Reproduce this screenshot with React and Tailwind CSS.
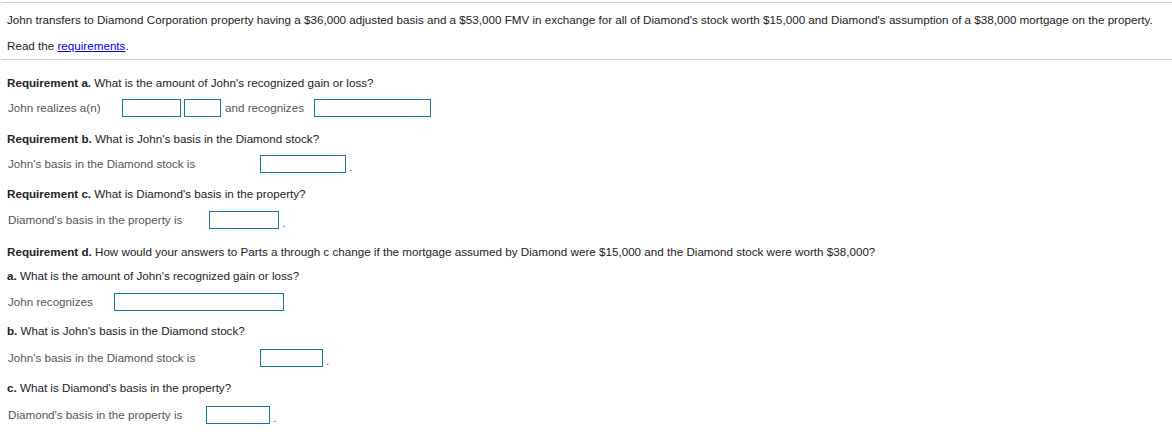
import React from "react";

const F = { fontFamily: '"Liberation Sans", Arial, sans-serif' };

function Box({ w, ml = 0 }) {
  return (
    <span
      className="inline-block h-[18px] border border-[#137a98] bg-white shrink-0"
      style={{ width: w, marginLeft: ml }}
    />
  );
}

function Q({ bold, text, className = "" }) {
  return (
    <div className={"h-[14px] leading-[14px] text-[11.65px] text-[#222] " + className}>
      <span className="font-bold text-[#222]">{bold}</span> {text}
    </div>
  );
}

export default function App() {
  return (
    <div className="w-[1172px] h-[446px] bg-white overflow-hidden" style={F}>
      <div className="h-[1px] mt-[2px] ml-[1px] bg-[#c8d0e0]" />
      <div className="pl-[7px] pt-[10px] text-[11.65px] leading-[14px] text-[#222] whitespace-nowrap">
        John transfers to Diamond Corporation property having a $36,000 adjusted basis and a $53,000 FMV in exchange for all of Diamond's stock worth $15,000 and Diamond's assumption of a $38,000 mortgage on the property.
      </div>
      <div className="pl-[7px] mt-[12px] text-[11.65px] leading-[14px] text-[#222]">
        Read the <span className="text-[#0000ee] underline">requirements</span>.
      </div>
      <div className="h-[1px] mt-[6px] ml-[1px] bg-[#c8d0e0]" />

      <div className="pl-[7px] text-[11.65px] whitespace-nowrap">
        <Q bold="Requirement a." text="What is the amount of John's recognized gain or loss?" className="mt-[16px]" />
        <div className="flex items-center mt-[9px] h-[18px] text-[#555]">
          <span className="ml-[1px] w-[114px]">John realizes a(n)</span>
          <Box w={59} />
          <Box w={37} ml={3} />
          <span className="ml-[4px] w-[89px]">and recognizes</span>
          <Box w={117} />
        </div>

        <Q bold="Requirement b." text="What is John's basis in the Diamond stock?" className="mt-[15px]" />
        <div className="flex items-center mt-[9px] h-[18px] text-[#555]">
          <span className="ml-[1px] w-[252px]">John's basis in the Diamond stock is</span>
          <Box w={86} />
          <span className="ml-[3px] mt-[6px]">.</span>
        </div>

        <Q bold="Requirement c." text="What is Diamond's basis in the property?" className="mt-[14px]" />
        <div className="flex items-center mt-[10px] h-[18px] text-[#555]">
          <span className="ml-[1px] w-[201px]">Diamond's basis in the property is</span>
          <Box w={70} />
          <span className="ml-[3px] mt-[6px]">.</span>
        </div>

        <Q
          bold="Requirement d."
          text="How would your answers to Parts a through c change if the mortgage assumed by Diamond were $15,000 and the Diamond stock were worth $38,000?"
          className="mt-[16px]"
        />
        <Q bold="a." text="What is the amount of John's recognized gain or loss?" className="mt-[10px]" />
        <div className="flex items-center mt-[10px] h-[18px] text-[#555]">
          <span className="ml-[1px] w-[106px]">John recognizes</span>
          <Box w={170} />
        </div>

        <Q bold="b." text="What is John's basis in the Diamond stock?" className="mt-[13px]" />
        <div className="flex items-center mt-[11px] h-[18px] text-[#555]">
          <span className="ml-[1px] w-[252px]">John's basis in the Diamond stock is</span>
          <Box w={63} />
          <span className="ml-[3px] mt-[6px]">.</span>
        </div>

        <Q bold="c." text="What is Diamond's basis in the property?" className="mt-[14px]" />
        <div className="flex items-center mt-[11px] h-[18px] text-[#555]">
          <span className="ml-[1px] w-[198px]">Diamond's basis in the property is</span>
          <Box w={64} />
          <span className="ml-[3px] mt-[6px]">.</span>
        </div>
      </div>
    </div>
  );
}
